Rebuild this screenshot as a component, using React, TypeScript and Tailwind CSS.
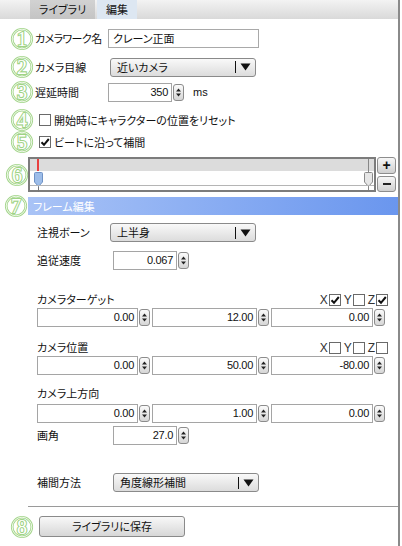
import React from "react";

const jp = "font-['Noto_Sans_CJK_JP','Noto_Sans',sans-serif] [font-feature-settings:'palt']";
const num = "font-['Liberation_Sans_Narrow','Liberation_Sans',sans-serif]";

function Circled({ n }: { n: number }) {
  return (
    <svg width="22" height="22" viewBox="0 0 22 22" className="shrink-0 overflow-visible">
      <circle cx="11" cy="11" r="9.8" fill="white" stroke="#a3d58b" strokeWidth="2.6" />
      <circle cx="11" cy="11" r="9.8" fill="none" stroke="#f6fcf2" strokeWidth="0.9" />
      <text x="11" y="17.8" textAnchor="middle" fontSize="20" fontFamily="'Liberation Serif', serif" fill="#9fd386" stroke="#9fd386" strokeWidth="2.2">
        {n}
      </text>
      <text x="11" y="17.8" textAnchor="middle" fontSize="20" fontFamily="'Liberation Serif', serif" fill="#ffffff">
        {n}
      </text>
    </svg>
  );
}

function Spinner() {
  return (
    <div className="w-[11px] h-[17px] shrink-0 rounded-[3px] border border-[#8c8c8c] bg-gradient-to-b from-[#fbfbfb] to-[#d6d6d6] flex items-center justify-center">
      <svg width="7" height="11" viewBox="0 0 7 11">
        <polygon points="1,4.5 3.5,1.5 6,4.5" fill="#222" />
        <polygon points="1,6.5 6,6.5 3.5,9.5" fill="#222" />
      </svg>
    </div>
  );
}

function NumBox({ value, w }: { value: string; w: string }) {
  return (
    <div className="flex items-center gap-[1px]">
      <div className={`${w} h-[19px] border border-[#a5a5a5] bg-white flex items-center justify-end pr-[3px] text-[11px] text-[#111] tracking-[-0.3px] ${num}`}>
        {value}
      </div>
      <Spinner />
    </div>
  );
}

function Dropdown({ text }: { text: string }) {
  return (
    <div className="w-[146px] h-[19px] rounded-[3px] border border-[#8a8a8a] bg-gradient-to-b from-[#f9f9f9] to-[#dcdcdc] flex items-center pl-[6px] pr-[4px]">
      <span className="flex-1 text-[11px] leading-none whitespace-nowrap">{text}</span>
      <div className="w-[1px] h-[12px] bg-[#111]" />
      <svg width="11" height="8" viewBox="0 0 11 8" className="ml-[4px]">
        <polygon points="0.5,0.5 10.5,0.5 5.5,7.5" fill="#111" />
      </svg>
    </div>
  );
}

function Check({ on }: { on?: boolean }) {
  return (
    <div className="w-[12px] h-[12px] shrink-0 border border-[#6a6a6a] bg-white flex items-center justify-center">
      {on && (
        <svg width="10" height="10" viewBox="0 0 10 10">
          <path d="M1.5 5.2 L4 7.8 L8.8 2" fill="none" stroke="#111" strokeWidth="2" />
        </svg>
      )}
    </div>
  );
}

function Axes({ x, y, z }: { x?: boolean; y?: boolean; z?: boolean }) {
  return (
    <div className="flex items-center text-[12px] text-[#333] font-['Liberation_Sans',sans-serif]">
      <span className="mr-[1px]">X</span>
      <Check on={x} />
      <span className="ml-[3px] mr-[1px]">Y</span>
      <Check on={y} />
      <span className="ml-[3px] mr-[1px]">Z</span>
      <Check on={z} />
    </div>
  );
}

function VecLabel({ label, axes }: { label: string; axes?: React.ReactNode }) {
  return (
    <div className="flex items-center justify-between h-[13px] w-[351px]">
      <span className="text-[11px] leading-none whitespace-nowrap">{label}</span>
      {axes}
    </div>
  );
}

function VecInputs({ values }: { values: string[] }) {
  return (
    <div className="flex items-center gap-[2px]">
      <NumBox value={values[0]} w="w-[101px]" />
      <NumBox value={values[1]} w="w-[105px]" />
      <NumBox value={values[2]} w="w-[102px]" />
    </div>
  );
}

export default function App() {
  return (
    <div className={`w-[402px] h-[546px] bg-white overflow-hidden text-[#111] whitespace-nowrap ${jp}`}>
      <div className="w-[400px] h-full border-r-2 border-[#8a8a8a] flex flex-col">
        {/* tabs */}
        <div className="h-[19px] shrink-0 bg-gradient-to-b from-[#f3f3f3] to-[#d9d9d9] flex pl-[30px]">
          <div className="w-[65px] bg-gradient-to-b from-[#d2d2d2] to-[#c4c4c4] flex items-center justify-center text-[11px]">ライブラリ</div>
          <div className="w-[40px] ml-[2px] bg-[#dde7f2] flex items-center justify-center text-[11px]">編集</div>
        </div>

        {/* 1 */}
        <div className="mt-[9px] h-[21px] flex items-center">
          <div className="w-[35px] pl-[11px]"><Circled n={1} /></div>
          <span className="w-[73px] text-[11px] tracking-[-0.6px]">カメラワーク名</span>
          <div className="w-[151px] h-[19px] border border-[#a9a9a9] bg-white flex items-center pl-[4px] text-[11px]">クレーン正面</div>
        </div>

        {/* 2 */}
        <div className="mt-[7px] h-[22px] flex items-center">
          <div className="w-[35px] pl-[11px]"><Circled n={2} /></div>
          <span className="w-[75px] text-[11px]">カメラ目線</span>
          <Dropdown text="近いカメラ" />
        </div>

        {/* 3 */}
        <div className="mt-[4px] h-[20px] flex items-center">
          <div className="w-[35px] pl-[11px]"><Circled n={3} /></div>
          <span className="w-[73px] text-[11px]">遅延時間</span>
          <NumBox value="350" w="w-[64px]" />
          <span className="ml-[9px] text-[11px] font-['Liberation_Sans',sans-serif]">ms</span>
        </div>

        {/* 4 */}
        <div className="mt-[8px] h-[20px] flex items-center">
          <div className="w-[35px] pl-[11px]"><Circled n={4} /></div>
          <div className="ml-[4px]"><Check /></div>
          <span className="ml-[3px] text-[11px]">開始時にキャラクターの位置をリセット</span>
        </div>

        {/* 5 */}
        <div className="mt-[2px] h-[20px] flex items-center">
          <div className="w-[35px] pl-[11px]"><Circled n={5} /></div>
          <div className="ml-[4px]"><Check on /></div>
          <span className="ml-[3px] text-[11px]">ビートに沿って補間</span>
        </div>

        {/* 6 timeline */}
        <div className="mt-[5px] h-[35px] flex items-center">
          <div className="w-[28px] pl-[6px]"><Circled n={6} /></div>
          <div className="relative w-[348px] h-[35px] border-2 border-[#7c7c7c] bg-white">
            <div className="h-[12px] bg-[#dcdcdc]" />
            <div className="absolute left-[7px] top-0 w-[2px] h-[12px] bg-[#e8403f]" />
            <div className="absolute left-[8px] top-[26px] w-[1px] h-[7px] bg-[#777]" />
            <svg className="absolute left-[4px] top-[13px]" width="9" height="15" viewBox="0 0 9 15">
              <path d="M1.5 0.5 H7.5 Q8.5 0.5 8.5 1.5 V10 L4.5 14.5 L0.5 10 V1.5 Q0.5 0.5 1.5 0.5 Z" fill="#9dbde9" stroke="#6f93c6" />
            </svg>
            <div className="absolute left-[338px] top-0 w-[1px] h-[31px] bg-[#888]" />
            <svg className="absolute left-[334px] top-[13px]" width="9" height="15" viewBox="0 0 9 15">
              <path d="M1.5 0.5 H7.5 Q8.5 0.5 8.5 1.5 V10 L4.5 14.5 L0.5 10 V1.5 Q0.5 0.5 1.5 0.5 Z" fill="#e6e6e6" stroke="#8a8a8a" />
            </svg>
            <div className="absolute left-0 right-0 bottom-[4px] h-[1px] bg-[#b5b5b5]" />
          </div>
          <div className="ml-[1px] w-[19px] h-[35px] flex flex-col gap-[2px]">
            <div className="flex-1 rounded-[3px] border border-[#8d8d8d] bg-gradient-to-b from-[#f7f7f7] to-[#d0d0d0] flex items-center justify-center text-[14px] font-bold leading-none font-['Liberation_Sans',sans-serif]">+</div>
            <div className="flex-1 rounded-[3px] border border-[#8d8d8d] bg-gradient-to-b from-[#f7f7f7] to-[#d0d0d0] flex items-center justify-center">
              <div className="w-[8px] h-[2px] bg-[#222]" />
            </div>
          </div>
        </div>

        {/* 7 header */}
        <div className="mt-[5px] h-[18px] flex items-center">
          <div className="w-[28px] pl-[5px]"><Circled n={7} /></div>
          <div className="flex-1 h-[18px] bg-gradient-to-r from-[#a9c3f6] to-[#6a96ee] flex items-center pl-[5px] text-[11px] text-white">フレーム編集</div>
        </div>

        {/* section */}
        <div className="pl-[37px] flex flex-col">
          <div className="mt-[8px] h-[19px] flex items-center">
            <span className="w-[73px] text-[11px]">注視ボーン</span>
            <Dropdown text="上半身" />
          </div>
          <div className="mt-[9px] h-[19px] flex items-center">
            <span className="w-[76px] text-[11px]">追従速度</span>
            <NumBox value="0.067" w="w-[64px]" />
          </div>

          <div className="mt-[23px]">
            <VecLabel label="カメラターゲット" axes={<Axes x z />} />
          </div>
          <div className="mt-[2px]"><VecInputs values={["0.00", "12.00", "0.00"]} /></div>

          <div className="mt-[14px]">
            <VecLabel label="カメラ位置" axes={<Axes />} />
          </div>
          <div className="mt-[2px]"><VecInputs values={["0.00", "50.00", "-80.00"]} /></div>

          <div className="mt-[12px]">
            <VecLabel label="カメラ上方向" />
          </div>
          <div className="mt-[4px]"><VecInputs values={["0.00", "1.00", "0.00"]} /></div>

          <div className="mt-[3px] h-[19px] flex items-center">
            <span className="w-[76px] text-[11px]">画角</span>
            <NumBox value="27.0" w="w-[64px]" />
          </div>

          <div className="mt-[28px] h-[19px] flex items-center">
            <span className="w-[76px] text-[11px]">補間方法</span>
            <Dropdown text="角度線形補間" />
          </div>
        </div>

        <div className="mt-[14px] ml-[28px] h-[1px] bg-[#9a9a9a]" />

        {/* 8 */}
        <div className="mt-[9px] h-[21px] flex items-center">
          <div className="w-[39px] pl-[11px]"><Circled n={8} /></div>
          <div className="w-[146px] h-[21px] rounded-[3px] border border-[#8a8a8a] bg-gradient-to-b from-[#f8f8f8] to-[#d7d7d7] flex items-center justify-center text-[11px]">ライブラリに保存</div>
        </div>
      </div>
    </div>
  );
}
